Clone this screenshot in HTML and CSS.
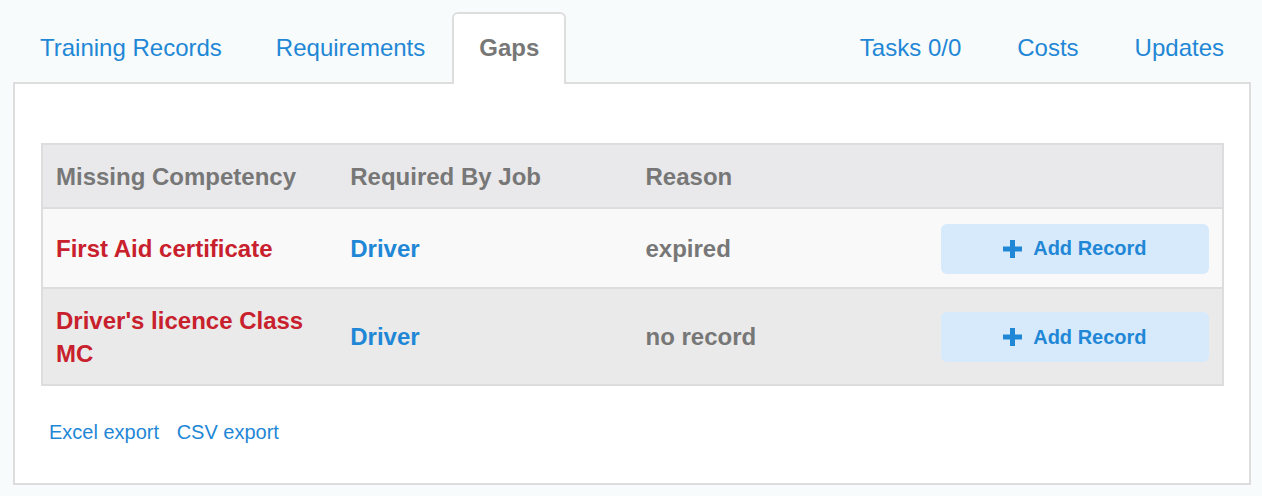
FILE: index.html
```html
<!DOCTYPE html>
<html lang="en">
<head>
  <meta charset="UTF-8" />
  <title>Gaps</title>
  <link rel="stylesheet" href="styles.css">
</head>
<body>
<div class="page">
  <ul class="tabs">
    <li><a href="#">Training Records</a></li>
    <li><a href="#">Requirements</a></li>
    <li class="active"><a href="#">Gaps</a></li>
    <li class="push"><a href="#">Tasks 0/0</a></li>
    <li><a href="#">Costs</a></li>
    <li><a href="#">Updates</a></li>
  </ul>

  <div class="panel">
    <table class="gaps">
      <thead>
        <tr><th>Missing Competency</th><th>Required By Job</th><th>Reason</th><th></th></tr>
      </thead>
      <tbody>
        <tr>
          <td class="missing">First Aid certificate</td>
          <td><a class="job" href="#">Driver</a></td>
          <td class="reason">expired</td>
          <td><button class="addBtn"><svg width="19" height="18" viewBox="0 0 19 18"><path d="M9.5 0v18M0 9h19" stroke="#1f87d6" stroke-width="5"/></svg>Add Record</button></td>
        </tr>
        <tr>
          <td class="missing">Driver's licence Class MC</td>
          <td><a class="job" href="#">Driver</a></td>
          <td class="reason">no record</td>
          <td><button class="addBtn"><svg width="19" height="18" viewBox="0 0 19 18"><path d="M9.5 0v18M0 9h19" stroke="#1f87d6" stroke-width="5"/></svg>Add Record</button></td>
        </tr>
      </tbody>
    </table>

    <div class="exports">
      <a href="#">Excel export</a>
      <a href="#">CSV export</a>
    </div>
  </div>
</div>
</body>
</html>
```

FILE: styles.css
```css
body { margin: 0; background: #f7fbfb; font-family: "Liberation Sans", Arial, sans-serif; }
a { color: #1f87d6; text-decoration: none; }
.page { padding: 12px 11px 0 13px; }

.tabs { display: flex; list-style: none; margin: 0 0 -2px; padding: 0; position: relative; }
.tabs .push { margin-left: auto; }
.tabs .push ~ li { margin-left: 2px; }
.tabs a {
  display: block;
  padding: 17px 25px 20px;
  border: 2px solid transparent; border-bottom: 0;
  border-radius: 6px 6px 0 0;
  font-size: 24px; line-height: 33px;
}
.tabs .active a {
  background: #fff; border-color: #ddd;
  color: #777; font-weight: bold;
}

.panel {
  background: #fff;
  border: 2px solid #ddd;
  padding: 59px 25px 37px 26px;
}

.gaps {
  width: 100%;
  table-layout: fixed;
  border-collapse: collapse;
  border: 2px solid #ddd;
  font-size: 24px; font-weight: bold; line-height: 33.6px;
}
.gaps th, .gaps td { padding: 15px 13px 13px; text-align: left; vertical-align: middle; }
.gaps th { color: #777; background: #e9e9eb; }
.gaps thead tr { border-bottom: 2px solid #ddd; }
.gaps tbody tr:nth-child(1) { background: #f9f9f9; border-bottom: 2px solid #ddd; }
.gaps tbody tr:nth-child(2) { background: #eaeaea; }
.missing { color: #c8202c; }
.reason { color: #777; }

.addBtn {
  display: flex; align-items: center; justify-content: center; gap: 11px;
  width: 100%; height: 50px;
  border: none; border-radius: 6px;
  background: #d6eafc; color: #1f87d6;
  font-family: inherit; font-size: 20px; font-weight: bold;
}

.exports { margin-top: 33px; padding-left: 8px; font-size: 20px; line-height: 27px; }
.exports a { margin-right: 12px; }
```
